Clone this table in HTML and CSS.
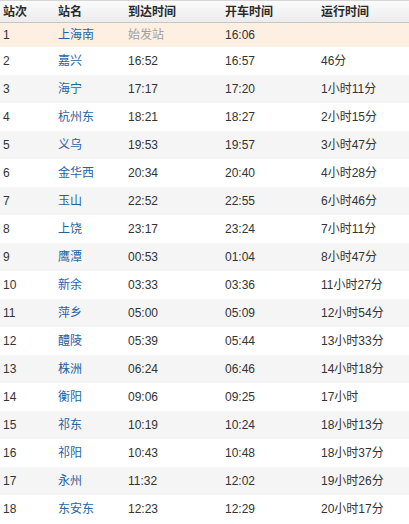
FILE: index.html
```html
<!DOCTYPE html>
<html lang="zh-CN">
<head>
<meta charset="utf-8">
<title>时刻表</title>
<link rel="stylesheet" href="styles.css">
</head>
<body>
<div class="timetable">
  <div class="row head">
    <div class="c">站次</div><div class="c">站名</div><div class="c">到达时间</div><div class="c">开车时间</div><div class="c">运行时间</div>
  </div>
  <div class="row first">
    <div class="c">1</div><div class="c st">上海南</div><div class="c muted">始发站</div><div class="c">16:06</div><div class="c"></div>
  </div>
  <div class="row"><div class="c">2</div><div class="c st">嘉兴</div><div class="c">16:52</div><div class="c">16:57</div><div class="c">46分</div></div>
  <div class="row alt"><div class="c">3</div><div class="c st">海宁</div><div class="c">17:17</div><div class="c">17:20</div><div class="c">1小时11分</div></div>
  <div class="row"><div class="c">4</div><div class="c st">杭州东</div><div class="c">18:21</div><div class="c">18:27</div><div class="c">2小时15分</div></div>
  <div class="row alt"><div class="c">5</div><div class="c st">义乌</div><div class="c">19:53</div><div class="c">19:57</div><div class="c">3小时47分</div></div>
  <div class="row"><div class="c">6</div><div class="c st">金华西</div><div class="c">20:34</div><div class="c">20:40</div><div class="c">4小时28分</div></div>
  <div class="row alt"><div class="c">7</div><div class="c st">玉山</div><div class="c">22:52</div><div class="c">22:55</div><div class="c">6小时46分</div></div>
  <div class="row"><div class="c">8</div><div class="c st">上饶</div><div class="c">23:17</div><div class="c">23:24</div><div class="c">7小时11分</div></div>
  <div class="row alt"><div class="c">9</div><div class="c st">鹰潭</div><div class="c">00:53</div><div class="c">01:04</div><div class="c">8小时47分</div></div>
  <div class="row"><div class="c">10</div><div class="c st">新余</div><div class="c">03:33</div><div class="c">03:36</div><div class="c">11小时27分</div></div>
  <div class="row alt"><div class="c">11</div><div class="c st">萍乡</div><div class="c">05:00</div><div class="c">05:09</div><div class="c">12小时54分</div></div>
  <div class="row"><div class="c">12</div><div class="c st">醴陵</div><div class="c">05:39</div><div class="c">05:44</div><div class="c">13小时33分</div></div>
  <div class="row alt"><div class="c">13</div><div class="c st">株洲</div><div class="c">06:24</div><div class="c">06:46</div><div class="c">14小时18分</div></div>
  <div class="row"><div class="c">14</div><div class="c st">衡阳</div><div class="c">09:06</div><div class="c">09:25</div><div class="c">17小时</div></div>
  <div class="row alt"><div class="c">15</div><div class="c st">祁东</div><div class="c">10:19</div><div class="c">10:24</div><div class="c">18小时13分</div></div>
  <div class="row"><div class="c">16</div><div class="c st">祁阳</div><div class="c">10:43</div><div class="c">10:48</div><div class="c">18小时37分</div></div>
  <div class="row alt"><div class="c">17</div><div class="c st">永州</div><div class="c">11:32</div><div class="c">12:02</div><div class="c">19小时26分</div></div>
  <div class="row"><div class="c">18</div><div class="c st">东安东</div><div class="c">12:23</div><div class="c">12:29</div><div class="c">20小时17分</div></div>
</div>
</body>
</html>
```
FILE: styles.css
```css
html, body {
  margin: 0;
  padding: 0;
  background: #ffffff;
}
body {
  font-family: "Liberation Sans", "Noto Sans CJK SC", sans-serif;
  font-size: 12px;
  color: #333333;
}
.timetable {
  width: 409px;
}
.row {
  display: grid;
  grid-template-columns: 55px 70px 97px 96px 1fr;
  height: 28px;
  align-items: center;
  background: #ffffff;
}
.row.alt {
  background: #f5f5f5;
}
.row.first {
  height: 24px;
  background: #fdefe1;
}
.row.head {
  height: 20px;
  border-top: 1px solid #d6d6d6;
  border-bottom: 1px solid #c6c6c6;
  background: linear-gradient(#fbfbfb, #ececec);
  font-weight: bold;
  color: #2a2a2a;
  padding-top: 1px;
  box-sizing: content-box;
}
.c {
  padding-left: 3px;
  white-space: nowrap;
  line-height: 16px;
}
.st {
  color: #1f63a3;
}
.muted {
  color: #a0a0a0;
}
```
